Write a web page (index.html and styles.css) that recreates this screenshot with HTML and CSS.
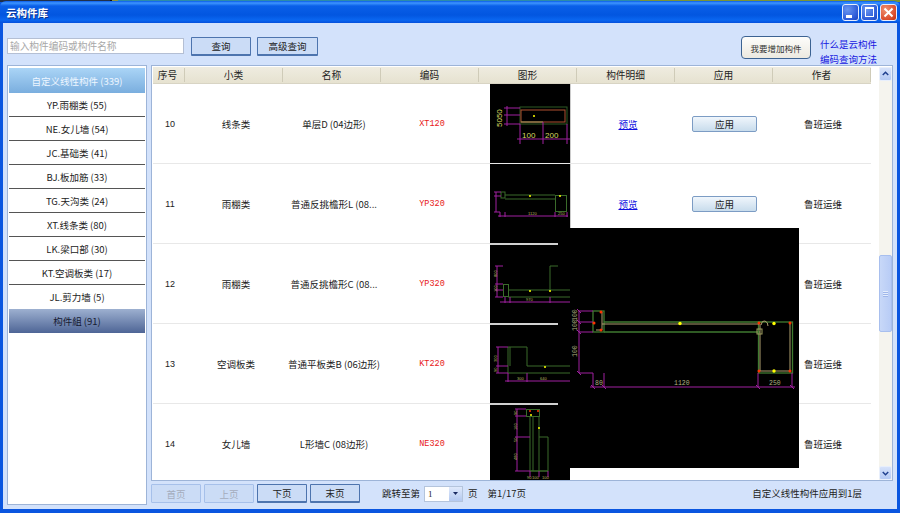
FILE: index.html
```html
<!DOCTYPE html>
<html lang="zh">
<head>
<meta charset="utf-8">
<title>云构件库</title>
<link rel="stylesheet" href="styles.css">
</head>
<body>
<div class="window">
  <div class="desktop-strip"></div>
  <header class="titlebar">
    <span class="title">云构件库</span>
    <div class="controls">
      <div class="ctl ctl-blue"><svg width="17" height="17" viewBox="0 0 17 17"><rect x="4" y="11" width="6" height="3" fill="#fff"/></svg></div>
      <div class="ctl ctl-blue"><svg width="17" height="17" viewBox="0 0 17 17"><rect x="4.5" y="4.5" width="8" height="8" fill="none" stroke="#fff"/><rect x="4" y="3" width="9" height="2" fill="#fff"/></svg></div>
      <div class="ctl ctl-red"><svg width="17" height="17" viewBox="0 0 17 17"><path d="M4.5 4.5l8 8M12.5 4.5l-8 8" stroke="#fff" stroke-width="2" fill="none"/></svg></div>
    </div>
  </header>
  <div class="client">
    <div class="toolbar">
      <div class="search-input">输入构件编码或构件名称</div>
      <button class="btn btn-query">查询</button>
      <button class="btn btn-query">高级查询</button>
      <div class="spacer"></div>
      <button class="btn-add">我要增加构件</button>
      <div class="links">
        <span>什么是云构件</span>
        <span>编码查询方法</span>
      </div>
    </div>
    <div class="main">
      <aside class="sidebar">
        <div class="cat cat-active">自定义线性构件 (339)</div>
        <div class="cat">YP.雨棚类 (55)</div>
        <div class="cat">NE.女儿墙 (54)</div>
        <div class="cat">JC.基础类 (41)</div>
        <div class="cat">BJ.板加筋 (33)</div>
        <div class="cat">TG.天沟类 (24)</div>
        <div class="cat">XT.线条类 (80)</div>
        <div class="cat">LK.梁口部 (30)</div>
        <div class="cat">KT.空调板类 (17)</div>
        <div class="cat cat-last">JL.剪力墙 (5)</div>
        <div class="cat cat-group">构件組 (91)</div>
      </aside>
      <div class="right">
        <section class="panel">
          <div class="table">
            <div class="thead">
              <div class="th">序号</div><div class="th">小类</div><div class="th">名称</div><div class="th">编码</div><div class="th">图形</div><div class="th">构件明细</div><div class="th">应用</div><div class="th">作者</div>
            </div>
            <div class="tbody">
              <div class="row">
                <div class="num">10</div><div>线条类</div><div>单层D (04边形)</div><div class="code">XT120</div>
                <div class="thumb thumb-edge">
                  <svg width="80" height="79" viewBox="490 84 80 79">
                    <g fill="none" stroke="#2f5a24"><rect x="520" y="107" width="47" height="17"/></g>
                    <g fill="none" stroke="#b05030"><rect x="521" y="110" width="44" height="12"/></g>
                    <path d="M521 122h22" stroke="#a0a060"/>
                    <g fill="none" stroke="#a020a0"><path d="M504 108h16M504 115h16M504 124h16M520 124v20M543 122v22M567 124v20M517 139h53M507 106v20"/></g>
                    <circle cx="534" cy="116" r="1" fill="#ff0"/>
                    <text class="cad cad-big" x="522" y="138">100</text><text class="cad cad-big" x="545" y="138">200</text>
                    <text class="cad cad-big" transform="translate(502 127) rotate(-90)">5050</text>
                  </svg>
                </div>
                <div><a class="preview">预览</a></div>
                <div><button class="btn-apply">应用</button></div>
                <div>鲁班运维</div>
              </div>
              <div class="row">
                <div class="num">11</div><div>雨棚类</div><div>普通反挑檐形L (08...</div><div class="code">YP320</div>
                <div class="thumb thumb-edge">
                  <svg width="80" height="79" viewBox="490 164 80 79">
                    <g fill="none" stroke="#3a6b2a"><rect x="501" y="192" width="4" height="6"/><path d="M505 195h50M505 199h50"/><rect x="555.5" y="195.5" width="11" height="16"/></g>
                    <g fill="none" stroke="#a020a0"><path d="M496 192v20M494 192h7M494 196h7M494 212h6M500 212v5M505 212v5M555 212v5M567 212v5M498 216h70"/></g>
                    <circle cx="530" cy="196" r="1" fill="#ff0"/><circle cx="560" cy="196" r="1" fill="#ff0"/>
                    <text class="cad" x="528" y="215">1120</text><text class="cad" x="558" y="215">250</text>
                  </svg>
                </div>
                <div><a class="preview">预览</a></div>
                <div><button class="btn-apply">应用</button></div>
                <div>鲁班运维</div>
              </div>
              <div class="row">
                <div class="num">12</div><div>雨棚类</div><div>普通反挑檐形C (08...</div><div class="code">YP320</div>
                <div class="thumb thumb-lined">
                  <svg width="80" height="79" viewBox="490 244 80 79">
                    <g fill="none" stroke="#3a6b2a"><rect x="503.5" y="284.5" width="5" height="12"/><path d="M508 290h62M508 297h62M550 266v24M550 266h8"/></g>
                    <g fill="none" stroke="#a020a0"><path d="M497 266v31M495 266h8M495 284h8M495 290h8M495 297h8M505 297v6M510 297v6M550 297v6M500 302h70"/></g>
                    <circle cx="530" cy="291" r="1" fill="#ff0"/><circle cx="550" cy="291" r="1" fill="#ff0"/>
                    <text class="cad" x="526" y="301">970</text>
                    <text class="cad" transform="translate(497 277) rotate(-90)">800</text>
                    <text class="cad" transform="translate(497 292) rotate(-90)">100</text>
                  </svg>
                </div>
                <div></div><div></div>
                <div>鲁班运维</div>
              </div>
              <div class="row">
                <div class="num">13</div><div>空调板类</div><div>普通平板类B (06边形)</div><div class="code">KT220</div>
                <div class="thumb thumb-lined">
                  <svg width="80" height="79" viewBox="490 324 80 79">
                    <g fill="none" stroke="#3a6b2a"><path d="M527 366v-19h-19v26h62M527 366h43M510 347v19"/></g>
                    <g fill="none" stroke="#a020a0"><path d="M498 347v26M496 347h12M496 366h12M496 373h12M508 373v9M527 373v9M505 381h65"/></g>
                    <circle cx="545" cy="367" r="1" fill="#ff0"/>
                    <text class="cad" x="517" y="380">300</text><text class="cad" x="540" y="380">640</text>
                    <text class="cad" transform="translate(497 362) rotate(-90)">300</text>
                    <text class="cad" transform="translate(497 372) rotate(-90)">90</text>
                  </svg>
                </div>
                <div></div><div></div>
                <div>鲁班运维</div>
              </div>
              <div class="row">
                <div class="num">14</div><div>女儿墙</div><div>L形墙C (08边形)</div><div class="code">NE320</div>
                <div class="thumb thumb-lined">
                  <svg width="80" height="79" viewBox="490 404 80 79">
                    <g fill="none" stroke="#3a6b2a"><rect x="526.5" y="409.5" width="13" height="7"/><path d="M530 416v55h9v-55M533 416v55M539 437h9v34h-9M530 471h18"/></g>
                    <g fill="none" stroke="#a020a0"><path d="M517 409v62M515 409h11M515 416h11M515 437h15M515 471h15M530 471v6M539 471v6M548 471v6"/></g>
                    <circle cx="530" cy="411" r="1" fill="#f30"/><circle cx="538" cy="411" r="1" fill="#f30"/><circle cx="531" cy="415" r="1" fill="#ff0"/><circle cx="539" cy="428" r="1" fill="#ff0"/>
                    <text class="cad" x="527" y="479">90</text><text class="cad" x="532" y="479">100</text><text class="cad" x="542" y="479">100</text>
                    <text class="cad" transform="translate(517 415) rotate(-90)">90</text>
                    <text class="cad" transform="translate(517 430) rotate(-90)">160</text>
                    <text class="cad" transform="translate(517 442) rotate(-90)">50</text>
                    <text class="cad" transform="translate(517 460) rotate(-90)">480</text>
                  </svg>
                </div>
                <div></div><div></div>
                <div>鲁班运维</div>
              </div>
            </div>
          </div>
          <div class="scrollbar">
            <div class="sb-btn"><svg width="12" height="12" viewBox="0 0 12 12"><path d="M3 7l3-3 3 3" fill="none" stroke="#1f3f8f" stroke-width="1.6"/></svg></div>
            <div class="sb-track">
              <div class="sb-thumb"><span></span></div>
            </div>
            <div class="sb-btn"><svg width="12" height="12" viewBox="0 0 12 12"><path d="M3 5l3 3 3-3" fill="none" stroke="#1f3f8f" stroke-width="1.6"/></svg></div>
          </div>
        </section>
        <footer class="pager">
          <button class="btn btn-page btn-off">首页</button>
          <button class="btn btn-page btn-off">上页</button>
          <button class="btn btn-page">下页</button>
          <button class="btn btn-page">末页</button>
          <span class="jump">跳转至第</span>
          <div class="select"><span>1</span><i class="select-btn"><svg width="13" height="13" viewBox="0 0 13 13"><path d="M4 5h5l-2.500 3z" fill="#1a2a60"/></svg></i></div>
          <span class="page-unit">页</span>
          <span class="page-of">第1/17页</span>
          <div class="spacer"></div>
          <span class="status">自定义线性构件应用到1层</span>
        </footer>
      </div>
    </div>
  </div>
  <div class="popup">
    <svg width="229" height="240" viewBox="570 228 229 240">
      <g fill="none" stroke="#3f7a30" stroke-width="1.300">
        <rect x="593" y="311" width="11" height="21"/>
        <path d="M604 322h158M604 332h156"/>
        <rect x="758.500" y="322" width="34" height="51"/>
      </g>
      <g fill="none" stroke="#b0a070">
        <path d="M602 324h157M602 312v18h-6M760 371h31M760 324v47M790 324v47"/>
      </g>
      <rect x="757" y="329" width="5" height="5" fill="none" stroke="#a0a060"/>
      <path d="M761 325q1-5 4-4t3 5" fill="none" stroke="#b0a070"/>
      <g fill="none" stroke="#a020a0" stroke-width="1">
        <path d="M579 311v62M579 311h14M579 322h14M579 332h14M579 373h14M593 373v14M604 373v14M758 373v14M792 373v14M590 387h205"/>
        <path d="M577 309l4 4M577 320l4 4M577 330l4 4M577 371l4 4M591 385l4 4M602 385l4 4M756 385l4 4M790 385l4 4"/>
      </g>
      <g fill="#f30">
        <circle cx="601" cy="312" r="1.500"/><circle cx="594" cy="323" r="1.500"/><circle cx="601" cy="330" r="1.500"/>
        <circle cx="759" cy="323" r="1.500"/><circle cx="790" cy="323" r="1.500"/><circle cx="759" cy="371" r="1.500"/><circle cx="790" cy="371" r="1.500"/>
      </g>
      <g fill="#ff0">
        <circle cx="680" cy="323.500" r="1.700"/><circle cx="774" cy="323.500" r="1.700"/><circle cx="774" cy="371" r="1.700"/>
      </g>
      <text class="cad-pop" x="595" y="385">80</text>
      <text class="cad-pop" x="674" y="385">1120</text>
      <text class="cad-pop" x="769" y="385">250</text>
      <text class="cad-pop" transform="translate(577 321) rotate(-90)">100</text>
      <text class="cad-pop" transform="translate(577 331) rotate(-90)">100</text>
      <text class="cad-pop" transform="translate(577 357) rotate(-90)">100</text>
    </svg>
  </div>
</div>
</body>
</html>
```

FILE: styles.css
```css
* { box-sizing: border-box; }
html, body { margin: 0; padding: 0; }
body {
  width: 900px;
  height: 513px;
  overflow: hidden;
  font-family: "Noto Sans CJK SC", "Noto Sans", sans-serif;
  font-size: 9.5px;
  color: #222;
}
.window {
  position: relative;
  width: 900px;
  height: 513px;
  display: flex;
  flex-direction: column;
  background: #0a56e0;
}
.desktop-strip {
  height: 2px;
  flex: none;
  background: linear-gradient(90deg, #20304a 0 110px, #111 110px 112px, #8a9440 112px 118px, #2c8ca8 118px 640px, #7c9434 640px 900px);
}
.titlebar {
  flex: none;
  height: 22px;
  display: flex;
  align-items: center;
  justify-content: space-between;
  padding: 1px 3px 0 6px;
  border-radius: 6px 6px 0 0;
  margin-top: -1px;
  background: linear-gradient(180deg, #0a5ce8 0, #3d95ff 2px, #0a5fe8 5px, #0256e0 14px, #0a66f0 19px, #0550dc 22px);
}
.title {
  color: #fff;
  font-weight: 700;
  font-size: 10.500px;
  text-shadow: 1px 1px 0 #0a2f90;
}
.controls { display: flex; gap: 2px; }
.ctl {
  width: 17px;
  height: 17px;
  border: 1px solid #e8eefc;
  border-radius: 3px;
  display: flex;
  align-items: center;
  justify-content: center;
}
.ctl svg { flex: none; }
.ctl-blue { background: radial-gradient(circle at 30% 30%, #6a96f0, #2c5ad8 70%, #1e44b8); }
.ctl-red { background: radial-gradient(circle at 30% 30%, #ee9070, #dc5030 65%, #c03010); }
.client {
  flex: 1;
  min-height: 0;
  display: flex;
  flex-direction: column;
  margin: 0 3px 4px;
  padding: 0 4px 3px;
  background: #d3e2fb;
}
.toolbar {
  flex: none;
  height: 42px;
  padding-top: 14px;
  display: flex;
  align-items: flex-start;
}
.search-input {
  width: 177px;
  height: 16px;
  margin-top: 1px;
  padding-left: 2px;
  line-height: 14px;
  font-size: 9.700px;
  color: #a8a8a8;
  background: #fff;
  border: 1px solid #b4bfd4;
}
.btn {
  font: inherit;
  color: #222;
  background: #cbdcf6;
  border: 1px solid #4d74ae;
  border-width: 1px 1px 2px 1px;
  padding: 0;
  border-radius: 1px;
}
.btn-query { width: 60px; height: 19px; margin-left: 7px; }
.btn-query + .btn-query { width: 61px; margin-left: 6px; }
.spacer { flex: 1; }
.btn-add {
  width: 70px;
  height: 23px;
  margin-top: -1px;
  font: inherit;
  font-size: 8.500px;
  color: #333;
  background: linear-gradient(180deg, #fdfdfb, #ece9e0);
  border: 1px solid #3c6392;
  border-radius: 4px;
  padding: 0;
}
.links {
  width: 67px;
  margin-right: 6px;
  margin-left: 9px;
  display: flex;
  flex-direction: column;
  gap: 1px;
  color: #1616e0;
  line-height: 14px;
}
.main { flex: 1; min-height: 0; display: flex; gap: 4px; }
.sidebar {
  width: 140px;
  flex: none;
  height: 440px;
  padding: 2px 1px 0;
  background: #fff;
  border: 1px solid #9db4d8;
  display: flex;
  flex-direction: column;
}
.cat {
  height: 24px;
  flex: none;
  display: flex;
  align-items: center;
  justify-content: center;
  border-bottom: 1px solid #555;
  background: #fff;
  color: #222;
  font-size: 9.500px;
}
.cat-active {
  height: 25px;
  border-bottom: 0;
  color: #eef6ff;
  background: linear-gradient(180deg, #aad4f6, #7aaede);
}
.cat-last { border-bottom: 0; }
.cat-group {
  color: #161a30;
  border-bottom: 0;
  background: linear-gradient(180deg, #9db0d0, #4e6596);
}
.right { flex: 1; min-width: 0; display: flex; flex-direction: column; }
.panel {
  flex: none;
  height: 416px;
  display: flex;
  background: #fff;
  border: 1px solid #9db4d8;
  padding: 1px 0 0 1px;
}
.table { flex: 1; min-width: 0; display: flex; flex-direction: column; }
.thead {
  flex: none;
  height: 17px;
  padding: 0 0 2px 1px;
  display: grid;
  grid-template-columns: 31px repeat(7, 98px);
  background: linear-gradient(180deg, #efece0, #e6e2d0);
  border-bottom: 1px solid #d8d4c4;
}
.th {
  display: flex;
  align-items: center;
  justify-content: center;
  border-right: 1px solid #cfcbb8;
  margin: 1px 0;
  font-size: 9.700px;
}
.th:first-child { padding-right: 3px; }
.tbody { flex: 1; min-height: 0; overflow: hidden; }
.row {
  height: 80px;
  display: grid;
  grid-template-columns: 34px repeat(6, 98px) 96px;
  border-bottom: 1px solid #e8e8e8;
  align-items: center;
  justify-items: center;
}
.row > div { text-align: center; }
.num { font-family: "Liberation Sans", sans-serif; font-size: 9px; }
.code { font-family: "Liberation Mono", monospace; font-size: 8.500px; color: #e81818; }
.thumb {
  width: 80px;
  height: 79px;
  background: #000;
  align-self: start;
  line-height: 0;
}
.thumb-edge { box-shadow: 1px 0 0 #ccc; }
.thumb-lined {
  height: 81px;
  margin-top: -1px;
  padding-top: 1px;
  background: linear-gradient(#d0d0d0, #d0d0d0) no-repeat 0 0 / 68px 2px, #000;
}
.row > .btn-cell { margin-right: 3px; }
.cad { font: 4px "Liberation Sans", sans-serif; fill: #b8b860; }
.cad-big { font-size: 8px; fill: #d8d860; }
.cad-pop { font: 6.500px "Liberation Mono", monospace; fill: #b0b080; }
.preview { color: #1010e0; text-decoration: underline; }
.btn-apply {
  width: 65px;
  height: 16px;
  margin-right: 3px;
  padding: 0;
  font: inherit;
  color: #222;
  background: linear-gradient(180deg, #f0f6fc, #c8dcec);
  border: 1px solid #7c9cc4;
  border-radius: 2px;
}
.scrollbar {
  width: 13px;
  flex: none;
  margin-left: 8px;
  display: flex;
  flex-direction: column;
  background: #f5f4ee;
}
.sb-btn {
  height: 14px;
  flex: none;
  display: flex;
  align-items: center;
  justify-content: center;
  background: linear-gradient(180deg, #d6e2fa, #b4c9f4);
  border: 1px solid #e8effc;
  border-radius: 2px;
}
.sb-track { flex: 1; min-height: 0; padding-top: 174px; }
.sb-thumb {
  height: 77px;
  display: flex;
  align-items: center;
  justify-content: center;
  background: linear-gradient(90deg, #c8d8f8, #b8ccf6);
  border: 1px solid #a8bfee;
  border-radius: 2px;
}
.sb-thumb span {
  width: 5px;
  height: 6px;
  background: repeating-linear-gradient(180deg, #e4edfc 0 1px, #9fb6ea 1px 2px);
}
.pager {
  flex: 1;
  display: flex;
  align-items: flex-start;
  padding-top: 3px;
  gap: 3px;
}
.btn-page { width: 50px; height: 19px; }
.btn-off {
  color: #a4acbc;
  border: 1px solid #a6c0ea;
}
.jump { margin-left: 19px; line-height: 19px; }
.select {
  width: 39px;
  height: 16px;
  margin: 2px 0 0 1px;
  background: #fff;
  border: 1px solid #b4c4dc;
  display: flex;
  justify-content: space-between;
  font: 9px "Liberation Serif", serif;
  line-height: 14px;
  padding: 0 0 0 3px;
}
.select-btn {
  width: 13px;
  height: 14px;
  background: linear-gradient(180deg, #dfe9fb, #b4c9f0);
  line-height: 0;
}
.page-unit { margin-left: 2px; line-height: 19px; }
.page-of { margin-left: 7px; line-height: 19px; }
.status { margin-right: 31px; line-height: 19px; }
.popup {
  position: absolute;
  left: 570px;
  top: 228px;
  width: 229px;
  height: 240px;
  background: #000;
  line-height: 0;
}
```
